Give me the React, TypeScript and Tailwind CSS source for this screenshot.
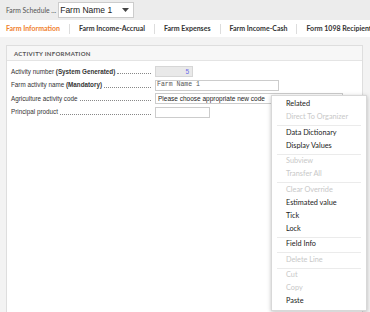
import React from "react";

type MenuItem = { label: string; disabled?: boolean; sep?: boolean };

const menu: MenuItem[] = [
  { label: "Related" },
  { label: "Direct To Organizer", disabled: true, sep: true },
  { label: "Data Dictionary" },
  { label: "Display Values", sep: true },
  { label: "Subview", disabled: true },
  { label: "Transfer All", disabled: true, sep: true },
  { label: "Clear Override", disabled: true },
  { label: "Estimated value" },
  { label: "Tick" },
  { label: "Lock", sep: true },
  { label: "Field Info", sep: true },
  { label: "Delete Line", disabled: true, sep: true },
  { label: "Cut", disabled: true },
  { label: "Copy", disabled: true },
  { label: "Paste" },
];

const tabs = [
  "Farm Information",
  "Farm Income-Accrual",
  "Farm Expenses",
  "Farm Income-Cash",
  "Form 1098 Recipient",
];

function Row({
  label,
  bold,
  children,
}: {
  label: string;
  bold?: string;
  children: React.ReactNode;
}) {
  return (
    <div className="flex items-center h-[13px]">
      <div className="flex items-end w-[144px] pr-[4px] text-[6.3px] text-[#333] font-['Liberation_Sans',sans-serif]">
        <span className="whitespace-nowrap">
          {label}
          {bold && <span className="font-bold"> ({bold})</span>}
        </span>
        <div className="flex-1 ml-[2px] mb-[2px] border-b border-dotted border-[#888]" />
      </div>
      {children}
    </div>
  );
}

export default function App() {
  return (
    <div className="relative w-[370px] h-[312px] overflow-hidden bg-[#f3f3f3] font-['Lato',sans-serif]">
      {/* top bar */}
      <div className="flex items-center h-[20px] bg-[#ececec] pl-[6px] gap-[2px]">
        <span className="text-[6.8px] text-[#555] whitespace-nowrap">Farm Schedule ...</span>
        <div className="flex items-center justify-between w-[76px] h-[16px] bg-white border border-[#ccc] pl-[1px] pr-[4px]">
          <span className="text-[8.5px] text-[#222] font-['Liberation_Sans',sans-serif] whitespace-nowrap">Farm Name 1</span>
          <svg width="7" height="4" viewBox="0 0 7 4">
            <path d="M0 0h7L3.5 4z" fill="#444" />
          </svg>
        </div>
      </div>

      {/* tabs */}
      <div className="flex items-center h-[17px] bg-white pl-[6px] text-[7px] font-bold text-[#333] whitespace-nowrap">
        {tabs.map((t, i) => (
          <React.Fragment key={t}>
            {i > 0 && <div className="shrink-0 w-px h-[10px] bg-[#ddd] mx-[9px]" />}
            <span className={i === 0 ? "shrink-0 text-[#f0822e]" : "shrink-0"}>{t}</span>
          </React.Fragment>
        ))}
      </div>

      {/* panel */}
      <div className="pt-[8px] pl-[6px] pr-[7px]">
        <div className="bg-white border border-[#dedede] h-[300px]">
          <div className="flex items-center h-[15px] bg-[#f7f7f7] border-b border-[#e4e4e4] pl-[7px] text-[6px] font-bold tracking-[0.3px] text-[#555]">
            ACTIVITY INFORMATION
          </div>
          <div className="pl-[4px] pt-[4px] flex flex-col gap-[0.5px]">
            <Row label="Activity number" bold="System Generated">
              <div className="flex items-center justify-end w-[38px] h-[11px] bg-[#e9e9e9] border border-[#d6d6d6] pr-[3px] text-[6.5px] text-[#6b6bea] font-['Liberation_Sans',sans-serif]">
                5
              </div>
            </Row>
            <Row label="Farm activity name" bold="Mandatory">
              <div className="flex items-center w-[124px] h-[11px] bg-white border border-[#ccc] pl-[1px] text-[6.5px] text-[#555] font-['Liberation_Mono',monospace] whitespace-nowrap">
                Farm Name 1
              </div>
            </Row>
            <Row label="Agriculture activity code">
              <div className="flex items-center w-[188px] h-[11px] bg-white border border-[#ccc] pl-[2px] text-[6.5px] text-[#222] font-['Liberation_Sans',sans-serif] whitespace-nowrap">
                Please choose appropriate new code
              </div>
            </Row>
            <Row label="Principal product">
              <div className="w-[55px] h-[11px] bg-white border border-[#ccc]" />
            </Row>
          </div>
        </div>
      </div>

      {/* context menu */}
      <div className="absolute left-[271px] top-[95px] w-[96px] bg-white border border-[#d8d8d8] shadow-[0_1px_4px_rgba(0,0,0,0.25)] pt-[2px] pb-[2px]">
        {menu.map((m) => (
          <div key={m.label} className={m.sep ? "border-b border-[#ebebeb] mx-[5px] pb-[1px] mb-[0.5px]" : "mx-[5px]"}>
            <div
              className={`flex items-center h-[13px] pl-[9px] text-[7.3px] whitespace-nowrap ${
                m.disabled ? "text-[#c8c8c8]" : "text-[#222]"
              }`}
            >
              {m.label}
            </div>
          </div>
        ))}
      </div>
    </div>
  );
}
